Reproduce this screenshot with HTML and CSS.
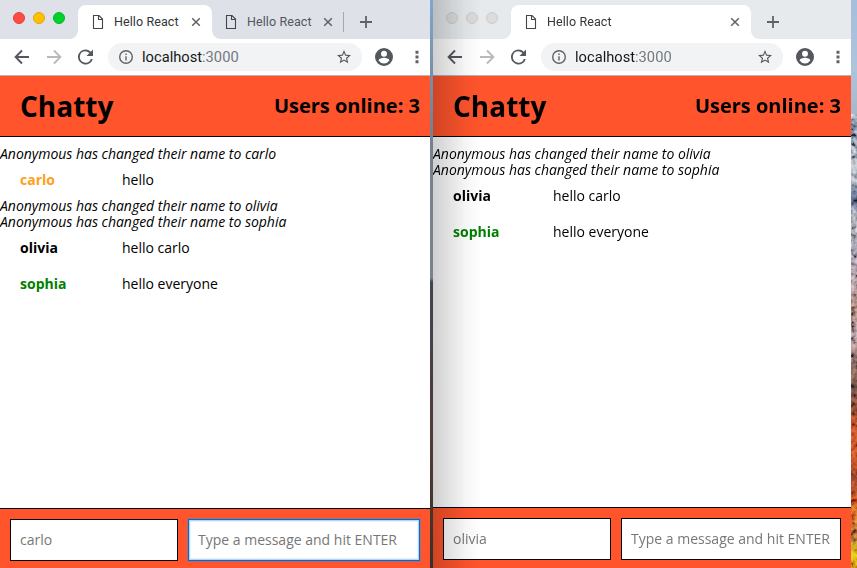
FILE: index.html
```html
<!DOCTYPE html>
<html lang="en">
<head>
<meta charset="utf-8">
<title>Hello React</title>
<link rel="stylesheet" href="styles.css">
</head>
<body>
<svg class="defs" aria-hidden="true">
  <symbol id="page" viewBox="0 0 12 16"><path d="M1.500 1.500h5.500l3.500 3.500v9.500h-9zM6.500 1.500v4h4" fill="none" stroke="#454649" stroke-width="1.1"/></symbol>
  <symbol id="close" viewBox="0 0 10 10"><path d="M1.2 1.2l7.6 7.6M8.8 1.2L1.2 8.8" stroke="#5f6368" stroke-width="1.5"/></symbol>
  <symbol id="plus" viewBox="0 0 12 12"><path d="M6 0v12M0 6h12" stroke="#5f6368" stroke-width="1.8"/></symbol>
  <symbol id="back" viewBox="0 0 16 16"><path d="M15 8H2M8 1.5L1.6 8 8 14.5" fill="none" stroke="currentColor" stroke-width="1.9"/></symbol>
  <symbol id="forward" viewBox="0 0 16 16"><path d="M1 8h13M8 1.5L14.4 8 8 14.5" fill="none" stroke="currentColor" stroke-width="1.9"/></symbol>
  <symbol id="reload" viewBox="4 4 16 16"><path d="M17.65 6.35A7.96 7.96 0 0 0 12 4a8 8 0 1 0 7.73 10h-2.08A6 6 0 1 1 12 6c1.66 0 3.14.69 4.22 1.78L13 11h7V4z" fill="#54585e"/></symbol>
  <symbol id="info" viewBox="2 2 20 20"><path d="M11 17h2v-6h-2zm1-15a10 10 0 1 0 0 20 10 10 0 0 0 0-20zm0 18a8 8 0 1 1 0-16 8 8 0 0 1 0 16zM11 9h2V7h-2z" fill="#5f6368"/></symbol>
  <symbol id="star" viewBox="2 2 20 20"><path d="M22 9.24l-7.19-.62L12 2 9.19 8.63 2 9.24l5.46 4.73L5.82 21 12 17.27 18.18 21l-1.63-7.03zM12 15.4l-3.76 2.27 1-4.28-3.32-2.88 4.38-.38L12 6.1l1.71 4.04 4.38.38-3.32 2.88 1 4.28z" fill="#54585e"/></symbol>
  <symbol id="user" viewBox="2 2 20 20"><path d="M12 2a10 10 0 1 0 0 20 10 10 0 0 0 0-20zm0 3a3.3 3.3 0 1 1 0 6.600 3.300 3.300 0 0 1 0-6.600zm0 14.200a7.200 7.200 0 0 1-6-3.220c.03-1.990 4-3.080 6-3.080s5.970 1.090 6 3.080a7.200 7.200 0 0 1-6 3.220z" fill="#54585e"/></symbol>
  <symbol id="more" viewBox="0 0 4 14"><path d="M.5.7h3v3h-3zM.5 5.500h3v3h-3zM.5 10.300h3v3h-3z" fill="#5f6368"/></symbol>
</svg>
<div class="desktop">
  <section class="window window-left">
    <div class="tabs">
      <div class="lights"><i class="red"></i><i class="yellow"></i><i class="green"></i></div>
      <div class="tab active"><svg class="page"><use href="#page"/></svg><span>Hello React</span><svg class="close"><use href="#close"/></svg></div>
      <div class="tab"><svg class="page"><use href="#page"/></svg><span>Hello React</span><svg class="close"><use href="#close"/></svg></div>
      <svg class="plus"><use href="#plus"/></svg>
    </div>
    <div class="toolbar">
      <svg class="nav"><use href="#back"/></svg><svg class="nav dim"><use href="#forward"/></svg><svg class="nav reload"><use href="#reload"/></svg>
      <div class="address"><svg class="info"><use href="#info"/></svg><span class="url">localhost<span>:3000</span></span><svg class="star"><use href="#star"/></svg></div>
      <svg class="user"><use href="#user"/></svg><svg class="more"><use href="#more"/></svg>
    </div>
    <header><h1>Chatty</h1><p>Users online: 3</p></header>
    <main>
      <p class="notice">Anonymous has changed their name to carlo</p>
      <div class="message"><b class="orange">carlo</b><span>hello</span></div>
      <p class="notice">Anonymous has changed their name to olivia</p>
      <p class="notice">Anonymous has changed their name to sophia</p>
      <div class="message"><b>olivia</b><span>hello carlo</span></div>
      <div class="message"><b class="forest">sophia</b><span>hello everyone</span></div>
    </main>
    <footer><div class="field name">carlo</div><div class="field focused">Type a message and hit ENTER</div></footer>
  </section>
  <div class="gap"></div>
  <section class="window window-right">
    <div class="tabs">
      <div class="lights"><i></i><i></i><i></i></div>
      <div class="tab active"><svg class="page"><use href="#page"/></svg><span>Hello React</span><svg class="close"><use href="#close"/></svg></div>
      <svg class="plus"><use href="#plus"/></svg>
    </div>
    <div class="toolbar">
      <svg class="nav"><use href="#back"/></svg><svg class="nav dim"><use href="#forward"/></svg><svg class="nav reload"><use href="#reload"/></svg>
      <div class="address"><svg class="info"><use href="#info"/></svg><span class="url">localhost<span>:3000</span></span><svg class="star"><use href="#star"/></svg></div>
      <svg class="user"><use href="#user"/></svg><svg class="more"><use href="#more"/></svg>
    </div>
    <header><h1>Chatty</h1><p>Users online: 3</p></header>
    <main>
      <p class="notice">Anonymous has changed their name to olivia</p>
      <p class="notice">Anonymous has changed their name to sophia</p>
      <div class="message"><b>olivia</b><span>hello carlo</span></div>
      <div class="message"><b class="forest">sophia</b><span>hello everyone</span></div>
    </main>
    <footer><div class="field name">olivia</div><div class="field">Type a message and hit ENTER</div></footer>
  </section>
  <div class="wallpaper">
    <svg class="foliage" viewBox="0 0 6 454">
      <filter id="grain" x="0" y="0" width="100%" height="100%"><feTurbulence type="fractalNoise" baseFrequency=".2" numOctaves="3" seed="4"/><feColorMatrix values="2 0 0 0 -.5  2 0 0 0 -.5  2 0 0 0 -.5  0 0 0 0 .7"/></filter>
      <rect width="6" height="454" filter="url(#grain)"/>
    </svg>
  </div>
</div>
</body>
</html>
```
FILE: styles.css
```css
* { box-sizing: border-box; }
body { margin: 0; overflow: hidden; font-family: "Open Sans", sans-serif; color: #000; }
.defs { display: none; }
svg { display: block; flex: none; }
.desktop { display: grid; grid-template-columns: 430px 3px 418px 6px; height: 568px; }
.window { display: flex; flex-direction: column; position: relative; background: #fff; min-width: 0; overflow: hidden; }

.tabs { display: flex; height: 39px; padding-top: 5px; background: #dee1e8; font: 12.5px Roboto, sans-serif; }
.window-right .tabs { background: #e6eaed; }
.lights { display: flex; gap: 8px; width: 78px; padding: 7px 0 0 13px; flex: none; }
.lights i { width: 12px; height: 12px; border-radius: 50%; background: #dcdcdc; border: 1px solid #cdcdcd; }
.lights .red { background: #ff4b47; border-color: #e93c38; }
.lights .yellow { background: #ffc000; border-color: #e2a800; }
.lights .green { background: #00d22b; border-color: #00b823; }
.tab { display: flex; align-items: center; width: 132px; padding: 0 11px 0 14px; color: #54575c; position: relative; }
.tab span { flex: 1; margin-left: 10px; letter-spacing: .09px; white-space: nowrap; }
.tab.active { width: 134px; background: #fff; color: #333538; border-radius: 8px 8px 0 0; }
.tab.active span { padding-bottom: 2px; }
.tab.active::before, .tab.active::after { content: ""; position: absolute; bottom: 0; width: 8px; height: 8px; }
.tab.active::before { left: -8px; background: radial-gradient(circle at 0 0, transparent 7.500px, #fff 8px); }
.tab.active::after { right: -8px; background: radial-gradient(circle at 100% 0, transparent 7.500px, #fff 8px); }
.window-left .tab:not(.active) { border-right: 1px solid #a5a8ae; height: 20px; margin-top: 7px; padding: 0 10px 0 13px; }
.window-left .tab:not(.active) span { padding-bottom: 1px; }
.window-right .tab.active { width: 240px; }
.page { width: 12px; height: 16px; }
.close { width: 10px; height: 10px; }
.plus { width: 12px; height: 12px; margin: 11px 0 0 16px; }

.toolbar { display: flex; align-items: center; height: 37px; border-bottom: 1px solid #b5b5b5; padding: 0 11px 0 14px; background: #fff; }
.nav { width: 16px; height: 16px; margin-right: 16px; color: #54585e; }
.nav.dim { color: #b8babd; }
.reload { margin-right: 15px; width: 15px; }
.address { display: flex; align-items: center; flex: 1; height: 28px; border-radius: 14px; background: #f1f3f4; padding: 0 11px; }
.info { width: 14px; height: 14px; }
.url { flex: 1; margin-left: 9px; font: 14.700px Roboto, sans-serif; color: #161719; }
.url span { color: #74797e; }
.star { width: 14px; height: 14px; }
.user { width: 18px; height: 18px; margin: 0 22px 0 13px; }
.more { width: 4px; height: 14px; }

header { display: flex; justify-content: space-between; align-items: center; height: 61px; padding: 0 10px 0 20px; background: #ff542c; border-bottom: 1px solid #000; }
h1 { margin: 0; font-size: 28px; font-weight: 700; }
header p { margin: 0; padding-bottom: 2px; font-size: 20px; font-weight: 700; }
main { flex: 1; padding-top: 9px; font-size: 14px; line-height: 16px; }
.notice { margin: 0; font-style: italic; letter-spacing: -.015px; white-space: nowrap; }
.message { display: flex; padding: 10px 20px; }
.message b { width: 102px; }
.window-right .message b { width: 100px; }
.orange { color: #ff9f1a; }
.forest { color: #008000; }
footer { display: flex; gap: 10px; height: 60px; padding: 10px 10px 0; background: #ff542c; border-top: 1px solid #000; }
.window-right footer { height: 61px; }
.field { flex: 1; height: 42px; border: 1px solid #000; background: #fff; color: #777; padding: 0 9px; font-size: 14px; line-height: 40px; white-space: nowrap; }
.field.name { flex: 0 0 168px; }
.field.focused { border-color: #1766b5; box-shadow: 0 0 0 1px #9a7188, inset 0 0 0 1px #b4d5f7, inset 0 0 0 2px #e6f2fd; }
.gap { background: linear-gradient(#7ea7d0 0, #7894ae 60px, #74818f 130px, #78838f 278px, #3f4352 282px, #44424e 340px, #4c3b3d 380px, #503c39 430px, #46372c 500px, #32312e 568px); }
.window-right::after { content: ""; position: absolute; inset: 0 auto 0 0; width: 48px; background: linear-gradient(90deg, rgba(0,0,0,.19), rgba(0,0,0,.12) 30%, rgba(0,0,0,.04) 68%, transparent); }
.wallpaper { display: flex; align-items: flex-end; background: linear-gradient(#a7bdd9 0, #b0c3dc 70px, #a8b7ca 114px, #626f83 122px, #788497 145px, #a3acb9 170px, #3e4a60 200px, #8f929e 217px, #777683 250px, #8d7a80 280px, #82655b 310px, #937e83 335px, #67504a 365px, #594139 390px, #713a27 410px, #b74220 430px, #b8441f 460px, #733423 480px, #b5491c 500px, #ca6423 520px, #89532a 535px, #d6a313 555px, #c58b13 568px); }
.foliage { width: 6px; height: 454px; mix-blend-mode: overlay; }
```
